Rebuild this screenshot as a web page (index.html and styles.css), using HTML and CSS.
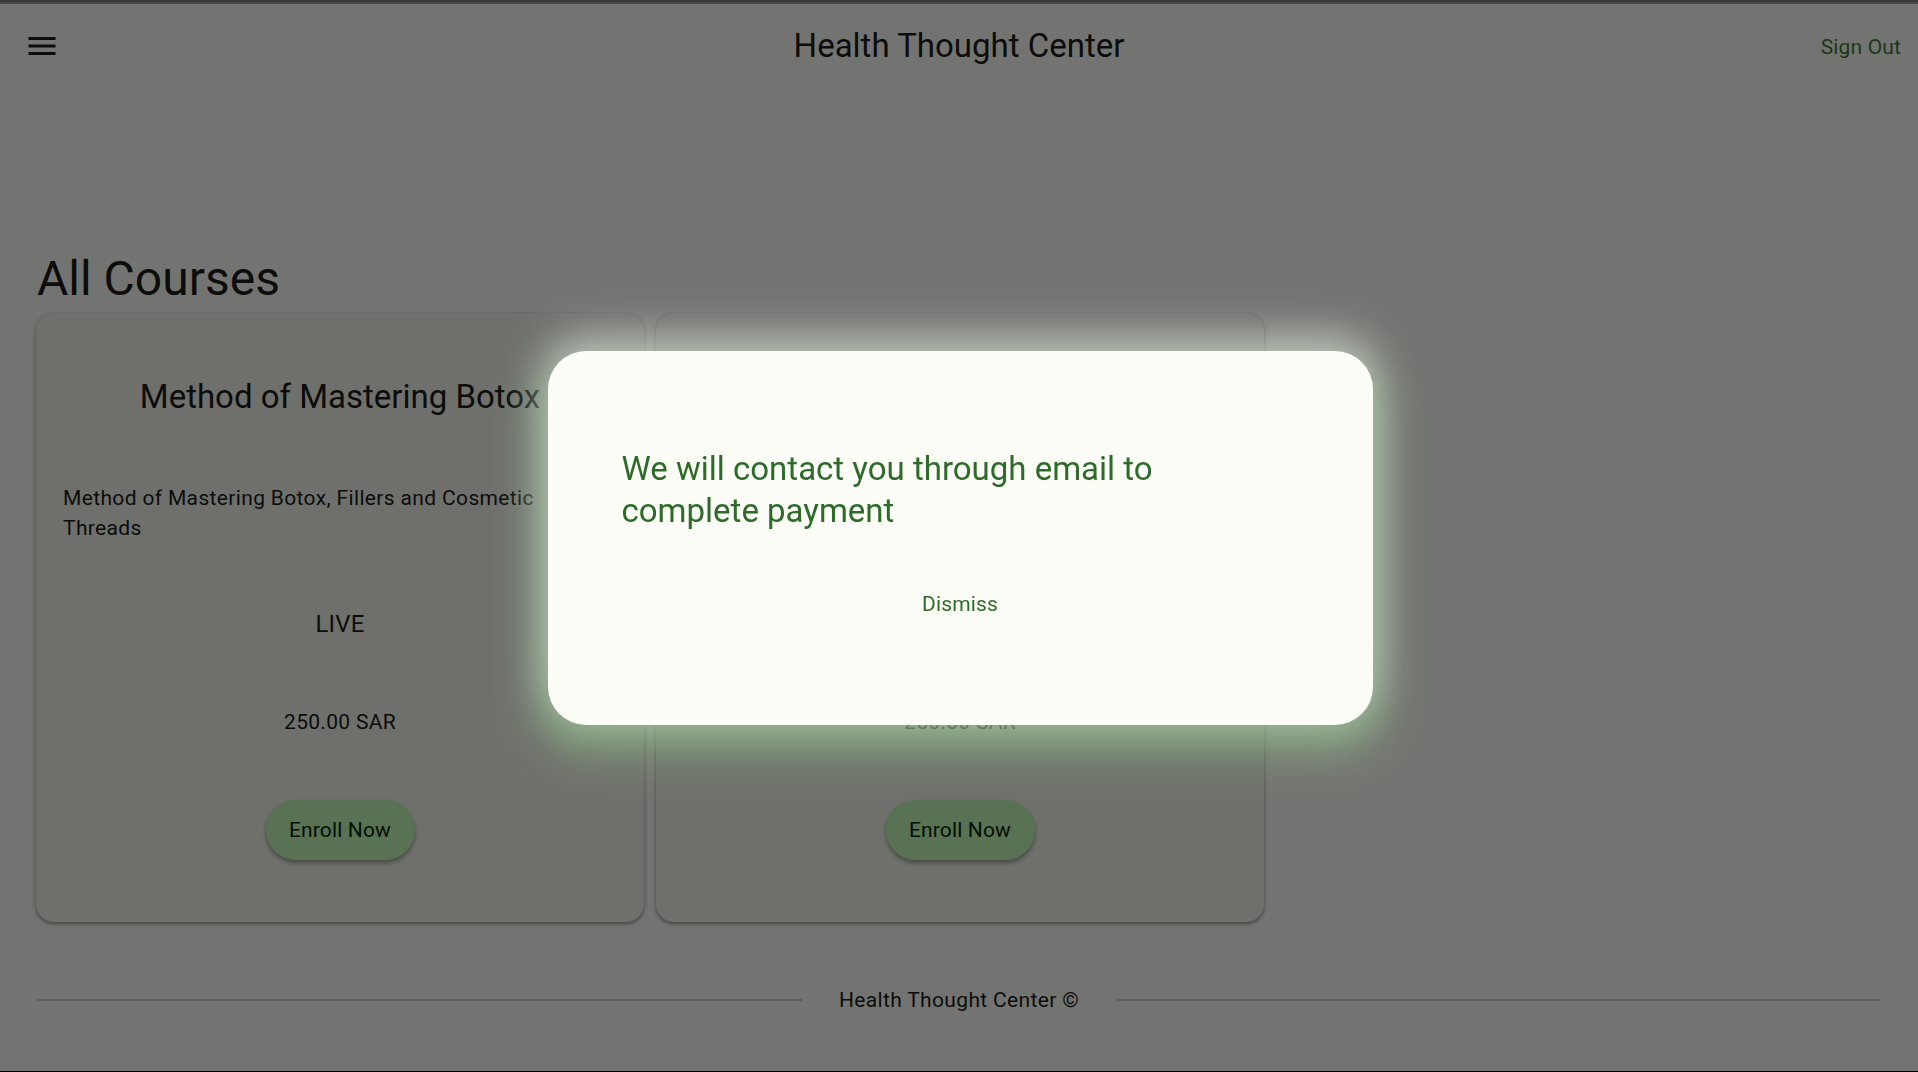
FILE: index.html
```html
<!DOCTYPE html>
<html lang="en">
<head>
<meta charset="utf-8">
<title>Health Thought Center</title>
<link rel="stylesheet" href="styles.css">
</head>
<body>
<div class="page">
  <div class="top-strip"></div>
  <header class="appbar">
    <div class="leading">
      <svg class="menu-icon" viewBox="0 0 24 24" width="36" height="36"><path d="M3 18h18v-2H3v2zm0-5h18v-2H3v2zm0-7v2h18V6H3z"/></svg>
    </div>
    <div class="app-title">Health Thought Center</div>
    <div class="actions"><span class="signout">Sign Out</span></div>
  </header>

  <main class="content">
    <h1 class="heading">All Courses</h1>
    <div class="grid">
      <section class="card">
        <h2 class="card-title">Method of Mastering Botox</h2>
        <p class="card-desc">Method of Mastering Botox, Fillers and Cosmetic Threads</p>
        <div class="card-type">LIVE</div>
        <div class="card-price">250.00 SAR</div>
        <button class="enroll">Enroll Now</button>
      </section>
      <section class="card">
        <h2 class="card-title">Method of Mastering Botox</h2>
        <p class="card-desc">Method of Mastering Botox, Fillers and Cosmetic Threads</p>
        <div class="card-type">LIVE</div>
        <div class="card-price">250.00 SAR</div>
        <button class="enroll">Enroll Now</button>
      </section>
    </div>
  </main>

  <footer class="footer">
    <div class="rule"></div>
    <div class="footer-text">Health Thought Center ©</div>
    <div class="rule"></div>
  </footer>
</div>

<div class="scrim">
  <div class="dialog">
    <p class="dialog-text">We will contact you through email to complete payment</p>
    <div class="dialog-actions"><span class="dismiss">Dismiss</span></div>
  </div>
</div>
</body>
</html>
```

FILE: styles.css
```css
* { box-sizing: border-box; }

html, body {
  margin: 0;
  padding: 0;
}

body {
  font-family: Roboto, "Noto Sans", "Liberation Sans", sans-serif;
  background: #fbfdf6;
  color: #1a1c18;
  overflow: hidden;
}

.page {
  height: 1072px;
  border-bottom: 1px solid #000;
  display: flex;
  flex-direction: column;
}

.top-strip {
  height: 4px;
  background: linear-gradient(#7c7c7c 0 50%, #999999 50% 100%);
}

.appbar {
  height: 84px;
  display: grid;
  grid-template-columns: 1fr auto 1fr;
  align-items: center;
}

.leading {
  width: 84px;
  height: 84px;
  display: flex;
  align-items: center;
  justify-content: center;
}

.menu-icon { fill: #1a1c18; display: block; }

.app-title {
  font-size: 33px;
  line-height: 42px;
  color: #1a1c18;
}

.actions {
  display: flex;
  justify-content: flex-end;
  padding-right: 17px;
}

.signout {
  font-size: 21px;
  line-height: 30px;
  color: #3d7a37;
  letter-spacing: 0.15px;
  padding-top: 2px;
}

.content {
  padding: 160.6px 36px 0 36px;
}

.heading {
  margin: 0 0 4.4px 1px;
  font-size: 48px;
  line-height: 60px;
  font-weight: 400;
  color: #1a1c18;
}

.grid {
  display: grid;
  grid-template-columns: repeat(3, 608px);
  gap: 12px;
}

.card {
  height: 609px;
  background: #f1f5eb;
  border-radius: 18px;
  box-shadow: 0 1.5px 3px rgba(0,0,0,0.28), 0 1.5px 4.5px 1.5px rgba(0,0,0,0.1);
  display: flex;
  flex-direction: column;
  align-items: center;
}

.card-title {
  margin: 63px 0 0 0;
  font-size: 33px;
  line-height: 42px;
  font-weight: 400;
  color: #1a1c18;
  text-align: center;
}

.card-desc {
  margin: 65.5px 0 0 0;
  align-self: stretch;
  padding: 0 48px 0 27px;
  font-size: 21px;
  line-height: 30px;
  letter-spacing: 0.35px;
  color: #1a1c18;
}

.card-type {
  margin-top: 63px;
  font-size: 24px;
  line-height: 36px;
  letter-spacing: 0.2px;
  color: #1a1c18;
}

.card-price {
  margin-top: 65px;
  font-size: 21px;
  line-height: 30px;
  letter-spacing: 0.3px;
  color: #1a1c18;
}

.enroll {
  margin-top: 63px;
  width: 149px;
  height: 60px;
  border: none;
  border-radius: 30px;
  background: #bff8b6;
  color: #0a2308;
  font-family: inherit;
  font-size: 21px;
  letter-spacing: 0.15px;
  padding: 0;
  box-shadow: 0 3px 5px rgba(0,0,0,0.35);
}

.footer {
  margin-top: 63.5px;
  padding: 0 36.7px;
  display: flex;
  align-items: center;
}

.rule {
  flex: 1;
  height: 2px;
  background: #cdd1c7;
}

.footer-text {
  margin: 0 37px;
  font-size: 21px;
  line-height: 30px;
  letter-spacing: 0.35px;
  color: #1a1c18;
}

.scrim {
  position: fixed;
  inset: 0;
  background: rgba(0,0,0,0.54);
  display: flex;
  align-items: center;
  justify-content: center;
  padding-top: 4px;
}

.dialog {
  width: 825px;
  height: 374px;
  margin-left: 2px;
  background: #fbfdf6;
  border-radius: 38px;
  padding: 97px 74px 0 74px;
  box-shadow: 0 -14px 40px 4px rgba(255,255,255,0.45), 0 16px 44px 10px rgba(150,205,140,0.55);
}

.dialog-text {
  margin: 0;
  max-width: 620px;
  font-size: 33px;
  line-height: 42px;
  color: #2e6b2a;
}

.dialog-actions {
  margin-top: 57px;
  display: flex;
  justify-content: center;
}

.dismiss {
  font-size: 21px;
  line-height: 30px;
  letter-spacing: 0.15px;
  color: #2e6b2a;
}
```
